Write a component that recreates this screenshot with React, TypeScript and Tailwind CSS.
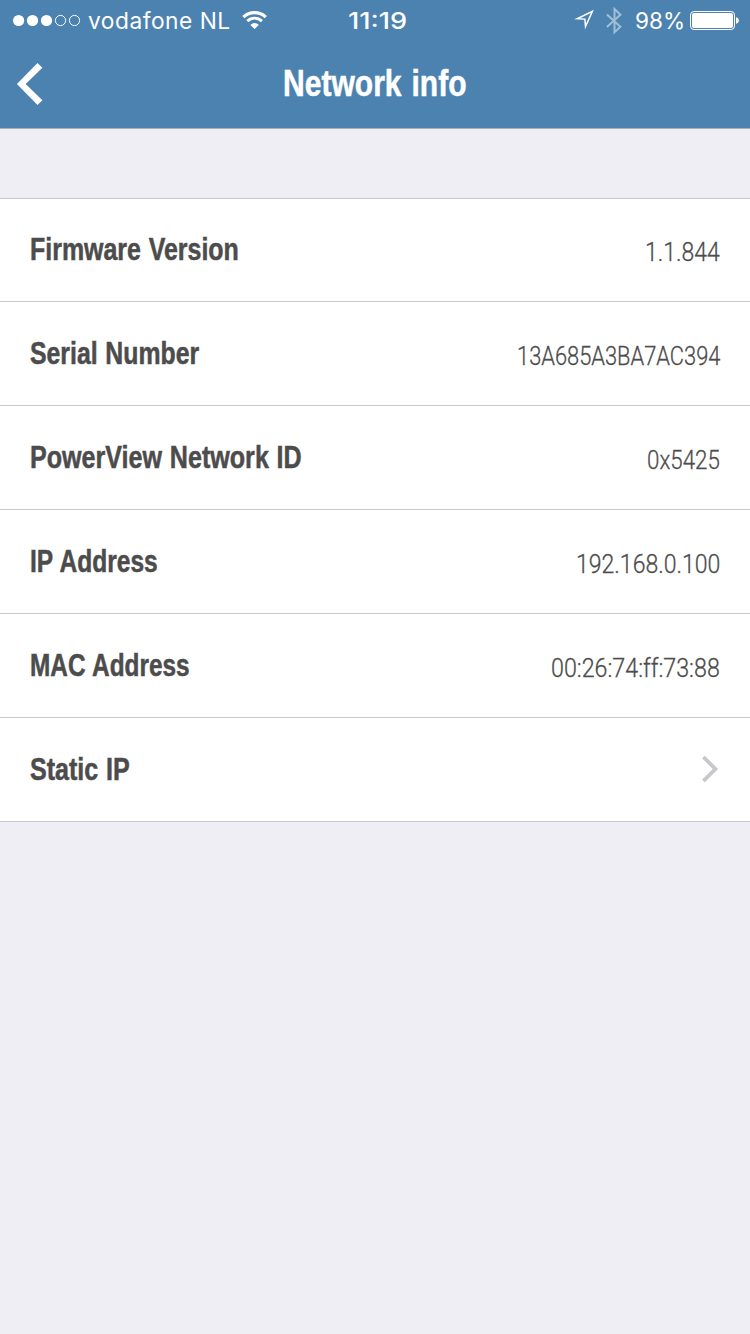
import { useLayoutEffect, useRef, useState } from "react";

type FitTextProps = { text: string; width: number; className?: string };

/* Condenses a line of text horizontally so that it fills the given width. */
function FitText({ text, width, className = "" }: FitTextProps) {
  const ref = useRef<HTMLSpanElement>(null);
  const [scale, setScale] = useState(1);
  useLayoutEffect(() => {
    if (ref.current) setScale(width / ref.current.offsetWidth);
  }, [text, width]);
  return (
    <span className="block shrink-0" style={{ width }}>
      <span
        ref={ref}
        className={`inline-block origin-left whitespace-nowrap ${className}`}
        style={{ transform: `scaleX(${scale})` }}
      >
        {text}
      </span>
    </span>
  );
}

type Row = { label: string; labelWidth: number; value?: string; valueWidth?: number };

const rows: Row[] = [
  { label: "Firmware Version", labelWidth: 208.5, value: "1.1.844", valueWidth: 75 },
  { label: "Serial Number", labelWidth: 169, value: "13A685A3BA7AC394", valueWidth: 203.5 },
  { label: "PowerView Network ID", labelWidth: 272, value: "0x5425", valueWidth: 73 },
  { label: "IP Address", labelWidth: 127.5, value: "192.168.0.100", valueWidth: 144.5 },
  { label: "MAC Address", labelWidth: 159.5, value: "00:26:74:ff:73:88", valueWidth: 169 },
  { label: "Static IP", labelWidth: 99.5 },
];

function StatusBar() {
  return (
    <div className="grid h-10 grid-cols-[1fr_60px_1fr] font-['Inter',sans-serif] text-[23px] leading-[42px]">
      <div className="flex pl-3">
        <svg className="mt-[14px] h-[13px] w-[70px]" viewBox="0 0 70 13" fill="white">
          <circle cx="6.6" cy="6.5" r="5.6" />
          <circle cx="20.5" cy="6.5" r="5.6" />
          <circle cx="34.5" cy="6.5" r="5.6" />
          <circle cx="48.5" cy="6.5" r="5.1" fill="none" stroke="white" strokeWidth="1" />
          <circle cx="62.5" cy="6.5" r="5.1" fill="none" stroke="white" strokeWidth="1" />
        </svg>
        <div className="ml-[6px] w-[143px]">
          <FitText text="vodafone NL" width={142.5} className="tracking-[0.5px]" />
        </div>
        <svg className="ml-[11px] mt-[10px] h-5 w-[26px]" viewBox="0 0 26 20" fill="none" stroke="white">
          <path d="M1.4 7.1a16 16 0 0 1 22.4 0" strokeWidth="3.2" />
          <path d="M5.3 11.1a10.4 10.4 0 0 1 14.6 0" strokeWidth="2.9" />
          <path d="M12.6 19l-4.2-4.1a5.8 5.8 0 0 1 8.4 0z" fill="white" stroke="none" />
        </svg>
      </div>
      <div className="pl-[3px]">
        <FitText text="11:19" width={59} className="font-medium" />
      </div>
      <div className="flex justify-end pr-[11px]">
        <svg className="mt-[9px] h-[22px] w-[22px]" viewBox="0 0 22 22" fill="none" stroke="white" strokeWidth="1.5" strokeMiterlimit="8">
          <path d="M4.2 9.7L19.4 2.4L12.5 17.6L11.9 10.1z" />
        </svg>
        <svg className="ml-[11px] mt-[7px] h-[28px] w-[17px]" viewBox="0 0 17 28" fill="none" stroke="#a0bfd6" strokeWidth="2">
          <path d="M.9 7.6L14.4 19.8L8.5 25.2V2L14.4 7.8L.9 20" />
        </svg>
        <div className="ml-[12px]">
          <FitText text="98%" width={50} />
        </div>
        <svg className="ml-[5px] mt-[11px] h-[19px] w-[49px]" viewBox="0 0 49 19">
          <rect x=".5" y=".5" width="44" height="18" rx="3.5" fill="none" stroke="white" />
          <rect x="2" y="2" width="41" height="15" rx="2" fill="white" />
          <path d="M46 6.2q2.8.6 2.8 3.3t-2.8 3.3z" fill="white" />
        </svg>
      </div>
    </div>
  );
}

function Header() {
  return (
    <header className="h-[129px] border-b border-[#a9adb5] bg-[#4c82b0] text-white">
      <StatusBar />
      <div className="grid h-[88px] grid-cols-[283px_186px_1fr]">
        <svg className="ml-4 mt-[22px] h-[44px] w-[28px]" viewBox="0 0 28 44" fill="white">
          <path d="M21.5.9L26.4 5.8L9.7 22L26.4 38.2L21.5 43.1L.9 22z" />
        </svg>
        <div className="pt-[19px] font-['Liberation_Sans_Narrow','Liberation_Sans',sans-serif] text-[37px] font-bold leading-[50px] [-webkit-text-stroke:0.5px_white] [word-spacing:2px]">
          <FitText text="Network info" width={183.5} />
        </div>
      </div>
    </header>
  );
}

export default function App() {
  return (
    <main className="min-h-[1334px] w-[750px] bg-[#efeef4]">
      <Header />
      <ul className="mt-[69px] border-t border-[#c8c7cc] bg-white text-[#4c4c4c]">
        {rows.map((row, i) => (
          <li
            key={row.label}
            className={`flex justify-between border-b border-[#c8c7cc] pl-[29px] pr-[30px] ${i === 0 ? "h-[103px]" : "h-[104px] pt-px"}`}
          >
            <div className="pt-[31px] font-['Liberation_Sans_Narrow','Liberation_Sans',sans-serif] text-[31px] font-bold leading-[40px] [-webkit-text-stroke:0.5px_#4c4c4c] [word-spacing:1px]">
              <FitText text={row.label} width={row.labelWidth} className="ml-[0.5px]" />
            </div>
            {row.value ? (
              <div className="pt-[33px] font-['Roboto',sans-serif] text-[26px] font-light leading-[40px] [-webkit-text-stroke:0.3px_#4c4c4c]">
                <FitText text={row.value} width={row.valueWidth ?? 0} />
              </div>
            ) : (
              <svg className="mr-px mt-[36px] h-[28px] w-[18px]" viewBox="0 0 18 28" fill="none" stroke="#c7c7cc" strokeWidth="3.8">
                <path d="M2.4 2L14.4 14L2.4 26" />
              </svg>
            )}
          </li>
        ))}
      </ul>
    </main>
  );
}
